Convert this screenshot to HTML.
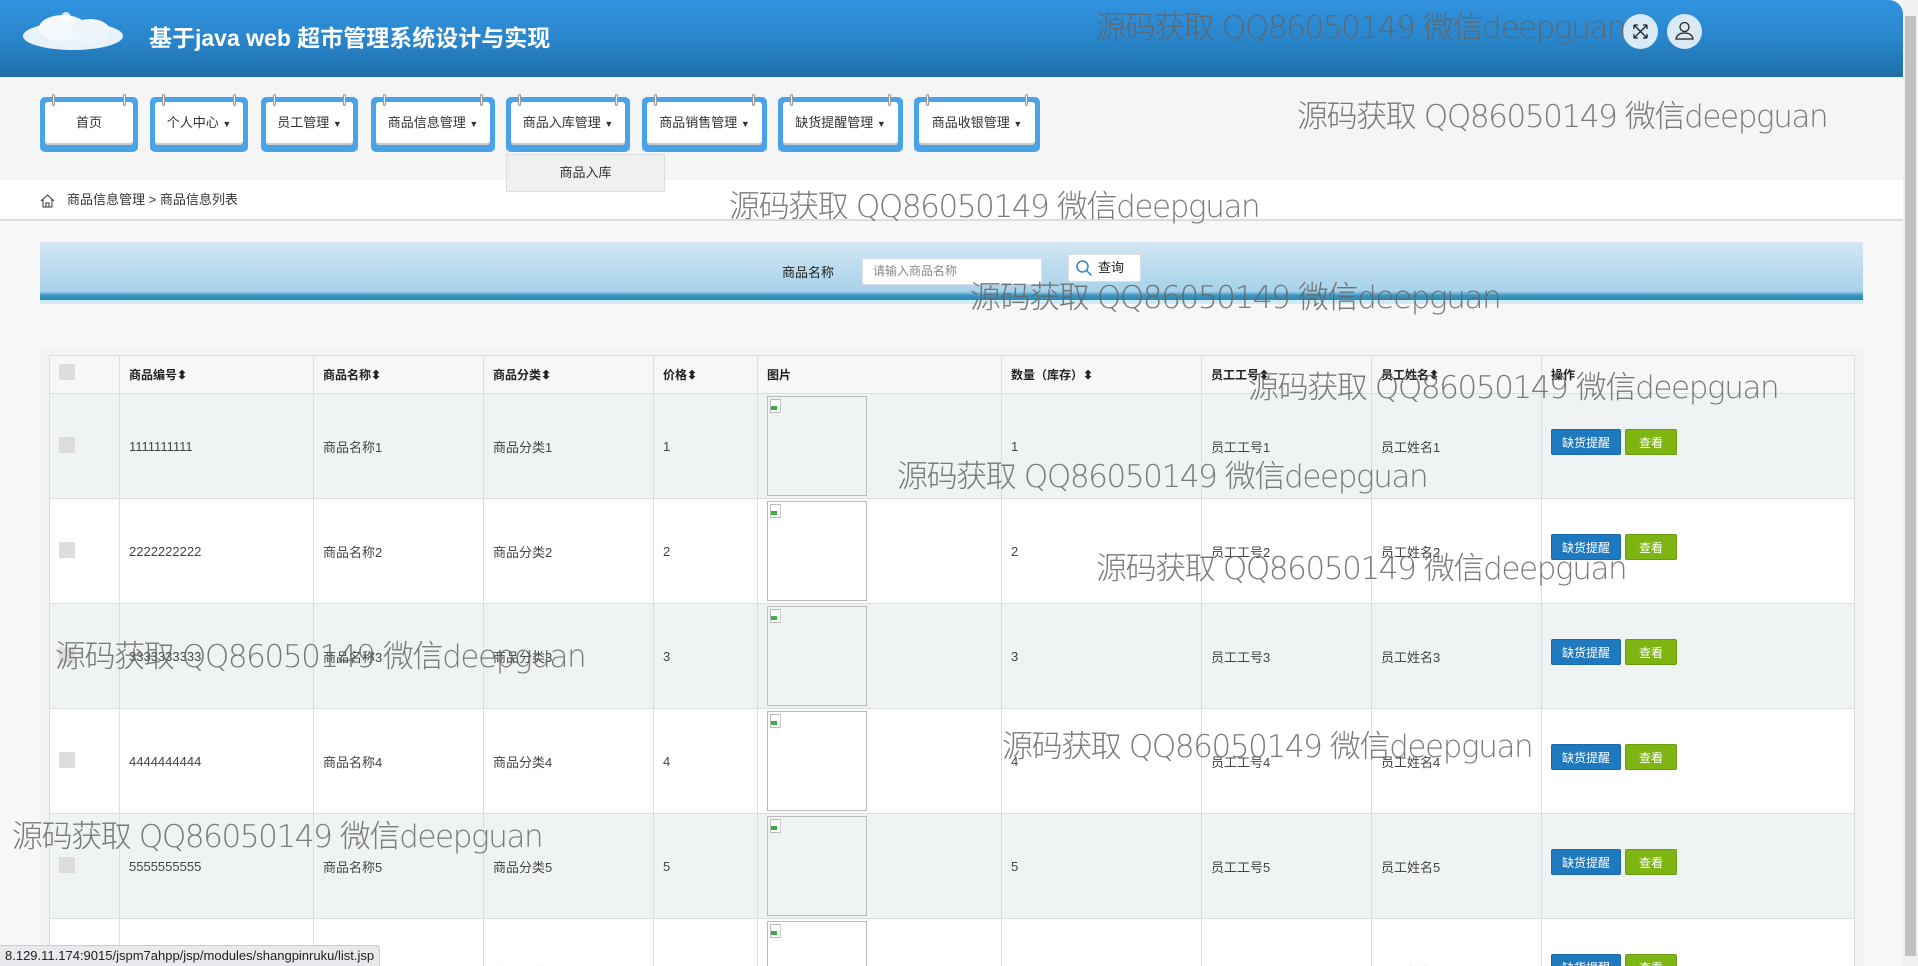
<!DOCTYPE html>
<html><head><meta charset="utf-8">
<style>
*{margin:0;padding:0;box-sizing:border-box}
html,body{width:1918px;height:966px;overflow:hidden}
body{background:#f7f7f7;font-family:"Liberation Sans","Noto Sans CJK SC",sans-serif;position:relative;font-size:13px;color:#333}
.hdr{position:absolute;left:0;top:0;width:1903px;height:77px;background:linear-gradient(#3193e0,#2a86cc 50%,#1c6fa8);border-top-right-radius:14px}
.title{position:absolute;left:149px;top:19px;color:#fff;font-size:23px;font-weight:bold}
.cloud{position:absolute;left:18px;top:12px;width:106px;height:40px}
.ic{position:absolute;top:14px;width:35px;height:35px;border-radius:50%;background:#d9eaf6}
.sb{position:absolute;left:1903px;top:0;width:15px;height:966px;background:#f1f1f1}
.sb div{position:absolute;left:2px;top:16px;width:11px;height:940px;background:#c1c1c1}
.nav{position:absolute;left:0;top:77px;width:1903px;height:103px;background:#f5f5f5}
.nb{position:absolute;top:97px;height:55px;background:#4aa3e6;border-radius:5px;padding:5px 5px 7px 5px}
.nb div{background:#fff;height:100%;border-radius:3px;text-align:center;line-height:42px;font-size:13px;color:#333;box-shadow:inset 0 -2px 0 #ccc}
.nb i,.nb b{position:absolute;top:-3px;width:3px;height:12px;background:#eee;border:1px solid #999;border-radius:2px}
.nb i{left:12px}.nb b{right:12px}
.car{font-size:9px}
.dd{position:absolute;left:506px;top:154px;width:159px;height:38px;background:#f0f0f0;border:1px solid #ddd;text-align:center;line-height:36px;font-size:13px}
.bc{position:absolute;left:0;top:180px;width:1903px;height:41px;background:#fff;border-bottom:2px solid #ddd;font-size:13px;line-height:40px;padding-left:67px}
.srch{position:absolute;left:40px;top:242px;width:1823px;height:58px;background:linear-gradient(#d3e7f3,#a7d2ea 85%,#3a95c0 92%,#2b88b5);}
.srch:after{content:"";position:absolute;left:0;right:0;bottom:-4px;height:4px;background:#cfeaf3}
.tbox{position:absolute;left:40px;top:346px;width:1823px;height:620px;background:#f3f3f3}
table{position:absolute;left:49px;top:355px;border-collapse:collapse;table-layout:fixed;width:1805px}
td,th{border:1px solid #ddd;font-size:13px;text-align:left;padding-left:9px;vertical-align:middle}
th{height:38px;font-weight:bold;font-size:12px;background:#f7f7f7;color:#222}
td{height:105px;color:#444}
tr.o td{background:#f0f3f3}
tr.e td{background:#fff}
.cb{display:inline-block;width:16px;height:16px;background:#ddd}
.img{width:100px;height:100px;border:1px solid #bbb;position:relative}
.img:before{content:"";position:absolute;left:2px;top:2px;width:9px;height:12px;border:1px solid #bbb;border-right-color:#ccc;background:#fff}
.img:after{content:"";position:absolute;left:3px;top:9px;width:6px;height:4px;background:#4a4}
.b1,.b2{display:inline-block;height:26px;line-height:26px;color:#fff;font-size:12px;border-radius:2px;padding:0 10px;margin-top:-8px;vertical-align:middle}
.b1{background:#1f79bf;border:1px solid #1a6aa8}
.b2{background:#7fb513;border:1px solid #6c9c10;margin-left:4px;padding:0 13px}
.wm{position:absolute;font-size:31px;color:rgba(100,100,100,.85);white-space:nowrap;font-family:"DejaVu Sans","Noto Sans CJK SC",sans-serif;font-weight:300;letter-spacing:-1.4px}
.status{position:absolute;left:0;top:945px;height:21px;padding:0 5px;background:#e8e9ec;border:1px solid #ccc;border-left:0;border-bottom:0;font-size:13px;line-height:20px;color:#222;border-top-right-radius:4px}
</style></head><body>
<div class="hdr">
<svg class="cloud" viewBox="0 0 106 40"><ellipse cx="55" cy="24" rx="50" ry="14" fill="#e8f2fa"/><ellipse cx="45" cy="16" rx="24" ry="13" fill="#f4f9fd"/><ellipse cx="72" cy="19" rx="20" ry="12" fill="#eef5fb"/><circle cx="48" cy="5" r="5" fill="#fff" opacity=".8"/></svg>
<div class="title">基于java web 超市管理系统设计与实现</div>
<div class="ic" style="left:1623px"><svg width="35" height="35" viewBox="0 0 35 35" fill="none" stroke="#222" stroke-width="1.3"><path d="M11 11l13 13M24 11L11 24M11 11h4M11 11v4M24 11h-4M24 11v4M11 24h4M11 24v-4M24 24h-4M24 24v-4"/></svg></div>
<div class="ic" style="left:1667px"><svg width="35" height="35" viewBox="0 0 35 35" fill="none" stroke="#222" stroke-width="1.3"><circle cx="17.5" cy="13" r="4.5"/><path d="M9 25c1-5 5-6 8.5-6s7.5 1 8.5 6z"/></svg></div>
</div>
<div class="sb"><div></div></div>
<div class="nav"></div>
<div class="nb" style="left:40px;width:98px"><i></i><b></b><div>首页</div></div>
<div class="nb" style="left:150px;width:98px"><i></i><b></b><div>个人中心 <span class="car">▼</span></div></div>
<div class="nb" style="left:261px;width:97px"><i></i><b></b><div>员工管理 <span class="car">▼</span></div></div>
<div class="nb" style="left:371px;width:124px"><i></i><b></b><div>商品信息管理 <span class="car">▼</span></div></div>
<div class="nb" style="left:506px;width:124px"><i></i><b></b><div>商品入库管理 <span class="car">▼</span></div></div>
<div class="nb" style="left:642px;width:125px"><i></i><b></b><div>商品销售管理 <span class="car">▼</span></div></div>
<div class="nb" style="left:778px;width:125px"><i></i><b></b><div>缺货提醒管理 <span class="car">▼</span></div></div>
<div class="nb" style="left:914px;width:126px"><i></i><b></b><div>商品收银管理 <span class="car">▼</span></div></div>
<div class="bc"><svg style="position:absolute;left:40px;top:13px" width="15" height="15" viewBox="0 0 15 15" fill="none" stroke="#333"><path d="M1 8L7.5 2 14 8M3 6.5V14h9V6.5M6 14v-4h3v4"/></svg>商品信息管理 &gt; 商品信息列表</div>
<div class="dd">商品入库</div>
<div class="srch">
<span style="position:absolute;left:742px;top:20px;font-size:13px;color:#222">商品名称</span>
<div style="position:absolute;left:822px;top:16px;width:180px;height:27px;background:#fff;border:1px solid #dde;font-size:12px;color:#888;line-height:25px;padding-left:10px">请输入商品名称</div>
<div style="position:absolute;left:1028px;top:12px;width:73px;height:28px;background:#fff;border:1px solid #ddd;border-radius:2px;font-size:13px;line-height:26px;padding-left:29px;color:#222"><svg style="position:absolute;left:6px;top:4px" width="18" height="18" viewBox="0 0 18 18" fill="none" stroke="#2a85d0" stroke-width="1.5"><circle cx="7.5" cy="7.5" r="5.5"/><path d="M11.5 11.5l5 5"/></svg>查询</div>
</div>
<div class="tbox"></div>
<table>
<colgroup><col style="width:70px"><col style="width:194px"><col style="width:170px"><col style="width:170px"><col style="width:104px"><col style="width:244px"><col style="width:200px"><col style="width:170px"><col style="width:170px"><col style="width:313px"></colgroup>
<tr><th><span class="cb" style="margin-top:-6px;vertical-align:middle"></span></th><th>商品编号⬍</th><th>商品名称⬍</th><th>商品分类⬍</th><th>价格⬍</th><th>图片</th><th>数量（库存）⬍</th><th>员工工号⬍</th><th>员工姓名⬍</th><th>操作</th></tr>
<tr class="o"><td><span class="cb"></span></td><td>1111111111</td><td>商品名称1</td><td>商品分类1</td><td>1</td><td><div class="img"></div></td><td>1</td><td>员工工号1</td><td>员工姓名1</td><td><span class="b1">缺货提醒</span><span class="b2">查看</span></td></tr>
<tr class="e"><td><span class="cb"></span></td><td>2222222222</td><td>商品名称2</td><td>商品分类2</td><td>2</td><td><div class="img"></div></td><td>2</td><td>员工工号2</td><td>员工姓名2</td><td><span class="b1">缺货提醒</span><span class="b2">查看</span></td></tr>
<tr class="o"><td><span class="cb"></span></td><td>3333333333</td><td>商品名称3</td><td>商品分类3</td><td>3</td><td><div class="img"></div></td><td>3</td><td>员工工号3</td><td>员工姓名3</td><td><span class="b1">缺货提醒</span><span class="b2">查看</span></td></tr>
<tr class="e"><td><span class="cb"></span></td><td>4444444444</td><td>商品名称4</td><td>商品分类4</td><td>4</td><td><div class="img"></div></td><td>4</td><td>员工工号4</td><td>员工姓名4</td><td><span class="b1">缺货提醒</span><span class="b2">查看</span></td></tr>
<tr class="o"><td><span class="cb"></span></td><td>5555555555</td><td>商品名称5</td><td>商品分类5</td><td>5</td><td><div class="img"></div></td><td>5</td><td>员工工号5</td><td>员工姓名5</td><td><span class="b1">缺货提醒</span><span class="b2">查看</span></td></tr>
<tr class="e"><td><span class="cb"></span></td><td>6666666666</td><td>商品名称6</td><td>商品分类6</td><td>6</td><td><div class="img"></div></td><td>6</td><td>员工工号6</td><td>员工姓名6</td><td><span class="b1">缺货提醒</span><span class="b2">查看</span></td></tr>
</table>
<div class="wm" style="left:1095px;top:2px">源码获取 QQ86050149 微信deepguan</div>
<div class="wm" style="left:1297px;top:91px">源码获取 QQ86050149 微信deepguan</div>
<div class="wm" style="left:729px;top:181px">源码获取 QQ86050149 微信deepguan</div>
<div class="wm" style="left:970px;top:272px">源码获取 QQ86050149 微信deepguan</div>
<div class="wm" style="left:1248px;top:362px">源码获取 QQ86050149 微信deepguan</div>
<div class="wm" style="left:897px;top:451px">源码获取 QQ86050149 微信deepguan</div>
<div class="wm" style="left:1096px;top:543px">源码获取 QQ86050149 微信deepguan</div>
<div class="wm" style="left:55px;top:631px">源码获取 QQ86050149 微信deepguan</div>
<div class="wm" style="left:1002px;top:721px">源码获取 QQ86050149 微信deepguan</div>
<div class="wm" style="left:12px;top:811px">源码获取 QQ86050149 微信deepguan</div>
<div class="status">8.129.11.174:9015/jspm7ahpp/jsp/modules/shangpinruku/list.jsp</div>
</body></html>
